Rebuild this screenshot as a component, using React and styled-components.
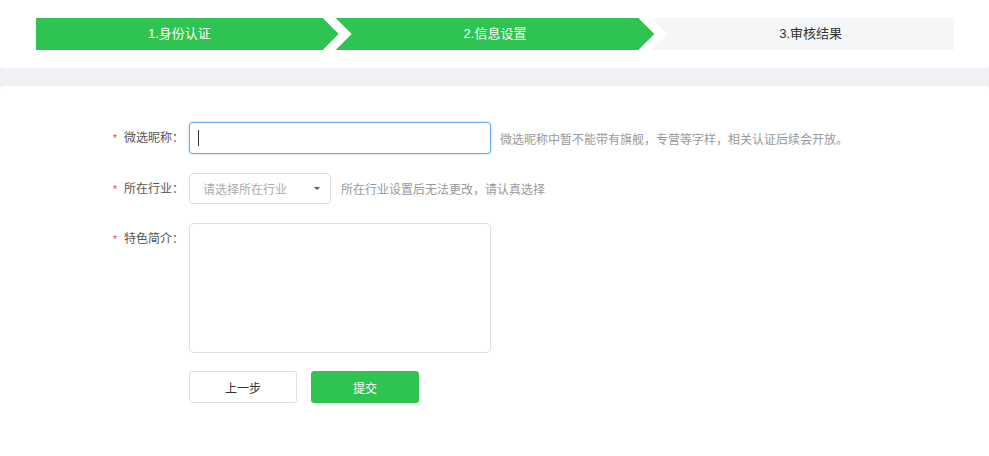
import React from "react"
import styled, { createGlobalStyle } from "styled-components"

const GlobalStyle = createGlobalStyle`
  html, body {
    margin: 0;
    padding: 0;
    background: #f0f1f4;
    font-family: "Liberation Sans", "Noto Sans CJK SC", sans-serif;
    font-size: 12px;
    color: #333;
  }
  * { box-sizing: border-box; }
`

const Page = styled.div`
  display: flex;
  flex-direction: column;
  gap: 18px;
  min-height: 100vh;
`

const TopCard = styled.div`
  background: #fff;
  border-radius: 0 0 4px 4px;
  padding: 18px 35px 18px 36px;
`

const Steps = styled.div`
  display: flex;
  height: 32px;
`

const arrow = "polygon(0 0, calc(100% - 16px) 0, 100% 50%, calc(100% - 16px) 100%, 0 100%)"
const both = "polygon(0 0, calc(100% - 16px) 0, 100% 50%, calc(100% - 16px) 100%, 0 100%, 16px 50%)"
const notch = "polygon(0 0, 100% 0, 100% 100%, 0 100%, 16px 50%)"

const Step = styled.div`
  flex: 1;
  display: flex;
  align-items: center;
  justify-content: center;
  font-size: 13px;
  line-height: 32px;
  background: ${props => (props.done ? "#2fc451" : "#f5f6f8")};
  color: ${props => (props.done ? "#fff" : "#333")};
  clip-path: ${props => (props.pos === "first" ? arrow : props.pos === "last" ? notch : both)};
  padding-left: ${props => (props.pos === "first" ? "0" : "16px")};
  padding-right: ${props => (props.pos === "last" ? "0" : "16px")};
  margin-left: ${props => (props.pos === "first" ? "0" : "-3px")};
`

const FormCard = styled.div`
  flex: 1;
  background: #fff;
  border-radius: 4px 4px 0 0;
  padding: 36px 0 40px;
  display: flex;
  flex-direction: column;
  gap: 19px;
`

const Row = styled.div`
  display: flex;
  align-items: ${props => (props.top ? "flex-start" : "center")};
`

const Label = styled.label`
  width: 184px;
  height: 31px;
  margin-right: 5px;
  display: flex;
  align-items: center;
  justify-content: flex-end;
  font-size: 12px;
  line-height: 1;
  color: #555;
  white-space: nowrap;
`

const Star = styled.span`
  color: #f04134;
  font-size: 10px;
  margin-right: 7px;
  padding-top: 2px;
`

const Colon = styled.span`
  width: 12px;
  text-align: center;
`

const Field = styled.div`
  position: relative;
`

const TextInput = styled.input`
  display: block;
  width: 302px;
  height: 32px;
  border: 1px solid #66aaf2;
  border-radius: 4px;
  box-shadow: 0 0 2px rgba(102, 170, 242, 0.6);
  padding: 0 8px;
  font-family: inherit;
  font-size: 12px;
  color: #333;
  outline: none;
`

const FakeCaret = styled.span`
  position: absolute;
  left: 9px;
  top: 8px;
  width: 1px;
  height: 16px;
  background: #333;
`

const Hint = styled.span`
  margin-left: ${props => props.gap || 9}px;
  font-size: 12px;
  color: #999;
`

const Select = styled.div`
  position: relative;
  width: 142px;
  height: 31px;
  border: 1px solid #d9e0e8;
  border-radius: 4px;
  padding: 0 13px;
  display: flex;
  align-items: center;
  font-size: 12px;
  color: #aaa;
`

const Caret = styled.span`
  position: absolute;
  right: 10px;
  top: 13px;
  width: 0;
  height: 0;
  border-left: 3px solid transparent;
  border-right: 3px solid transparent;
  border-top: 3px solid #555;
`

const TextArea = styled.textarea`
  display: block;
  width: 302px;
  height: 130px;
  border: 1px solid #d9e0e8;
  border-radius: 4px;
  resize: none;
  outline: none;
  font-family: inherit;
  font-size: 12px;
`

const Actions = styled.div`
  display: flex;
  gap: 14px;
  margin-left: 189px;
  margin-top: -1px;
`

const Button = styled.button`
  width: 108px;
  height: 32px;
  border-radius: 3px;
  font-family: inherit;
  font-size: 12px;
  cursor: pointer;
  border: 1px solid ${props => (props.primary ? "#2fc451" : "#d9e0e8")};
  background: ${props => (props.primary ? "#2fc451" : "#fff")};
  color: ${props => (props.primary ? "#fff" : "#333")};
`

const FieldLabel = ({ children }) => (
  <Label>
    <Star>*</Star>
    {children}
    <Colon>：</Colon>
  </Label>
)

export default function App() {
  return (
    <Page>
      <GlobalStyle />
      <TopCard>
        <Steps>
          <Step done pos="first">1.身份认证</Step>
          <Step done pos="mid">2.信息设置</Step>
          <Step pos="last">3.审核结果</Step>
        </Steps>
      </TopCard>
      <FormCard>
        <Row>
          <FieldLabel>微选昵称</FieldLabel>
          <Field>
            <TextInput />
            <FakeCaret />
          </Field>
          <Hint>微选昵称中暂不能带有旗舰，专营等字样，相关认证后续会开放。</Hint>
        </Row>
        <Row>
          <FieldLabel>所在行业</FieldLabel>
          <Select>
            请选择所在行业
            <Caret />
          </Select>
          <Hint gap={10}>所在行业设置后无法更改，请认真选择</Hint>
        </Row>
        <Row top>
          <FieldLabel>特色简介</FieldLabel>
          <TextArea />
        </Row>
        <Actions>
          <Button>上一步</Button>
          <Button primary>提交</Button>
        </Actions>
      </FormCard>
    </Page>
  )
}
